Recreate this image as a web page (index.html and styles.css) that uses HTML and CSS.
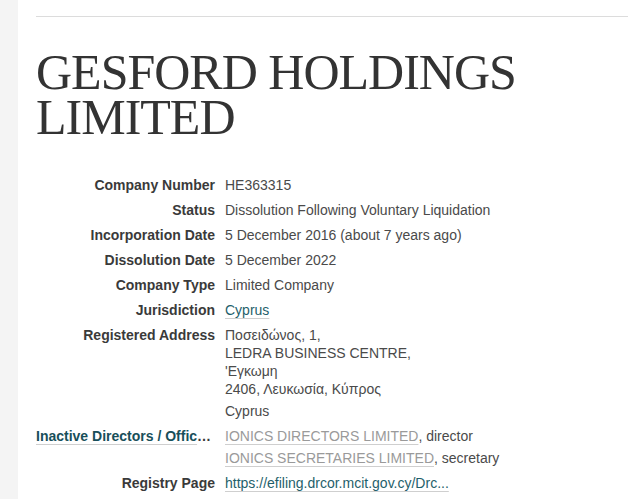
FILE: index.html
```html
<!DOCTYPE html>
<html lang="en">
<head>
<meta charset="utf-8">
<title>GESFORD HOLDINGS LIMITED</title>
<link rel="stylesheet" href="styles.css">
</head>
<body>
<div class="page">
  <aside class="sidebar"></aside>
  <main class="main">
    <div class="rule"></div>
    <h1 class="title">GESFORD HOLDINGS LIMITED</h1>
    <dl class="attrs">
      <dt>Company Number</dt>
      <dd>HE363315</dd>
      <dt>Status</dt>
      <dd>Dissolution Following Voluntary Liquidation</dd>
      <dt>Incorporation Date</dt>
      <dd>5 December 2016 (about 7 years ago)</dd>
      <dt>Dissolution Date</dt>
      <dd>5 December 2022</dd>
      <dt>Company Type</dt>
      <dd>Limited Company</dd>
      <dt>Jurisdiction</dt>
      <dd><a class="link" href="#">Cyprus</a></dd>
      <dt>Registered Address</dt>
      <dd>
        <div class="addr">Ποσειδώνος, 1,<br>LEDRA BUSINESS CENTRE,<br>'Εγκωμη<br>2406, Λευκωσία, Κύπρος</div>
        <div class="sub">Cyprus</div>
      </dd>
      <dt class="dt-link"><a class="link strong" href="#">Inactive Directors / Officers</a></dt>
      <dd>
        <div><a class="link muted" href="#">IONICS DIRECTORS LIMITED</a>, director</div>
        <div class="sub"><a class="link muted" href="#">IONICS SECRETARIES LIMITED</a>, secretary</div>
      </dd>
      <dt>Registry Page</dt>
      <dd><a class="link" href="#">https://efiling.drcor.mcit.gov.cy/Drc...</a></dd>
    </dl>
  </main>
</div>
</body>
</html>
```

FILE: styles.css
```css
html, body {
  margin: 0;
  padding: 0;
  background: #fff;
}
.page {
  display: flex;
  min-height: 499px;
}
.sidebar {
  width: 18px;
  flex: 0 0 18px;
  background: #f4f4f4;
}
.main {
  flex: 1;
  padding: 16px 0 0 18px;
  font-family: "Liberation Sans", Arial, sans-serif;
}
.rule {
  border-top: 1px solid #dcdcdc;
}
.title {
  margin: 33px 0 0 0;
  font-family: "Liberation Serif", "Times New Roman", serif;
  font-weight: normal;
  font-size: 50px;
  line-height: 45px;
  letter-spacing: -1px;
  color: #333;
  width: 520px;
}
.attrs {
  margin: 36px 0 0 0;
  display: grid;
  grid-template-columns: 179px 1fr;
  column-gap: 10px;
  row-gap: 7px;
  font-size: 14px;
  line-height: 18px;
}
.attrs dt {
  font-weight: bold;
  color: #3a3a3a;
  text-align: right;
  white-space: nowrap;
}
.attrs dd {
  margin: 0;
  color: #4a4a4a;
}
.attrs .dt-link {
  text-align: left;
  overflow: hidden;
  text-overflow: ellipsis;
}
.sub {
  margin-top: 4px;
}
.link {
  color: #1f5f6b;
  text-decoration: underline;
  text-decoration-color: #cfcfcf;
  text-underline-offset: 3px;
  text-decoration-thickness: 1px;
}
.link.strong {
  color: #184f5a;
  font-weight: bold;
}
.link.muted {
  color: #9a9a9a;
}
```
